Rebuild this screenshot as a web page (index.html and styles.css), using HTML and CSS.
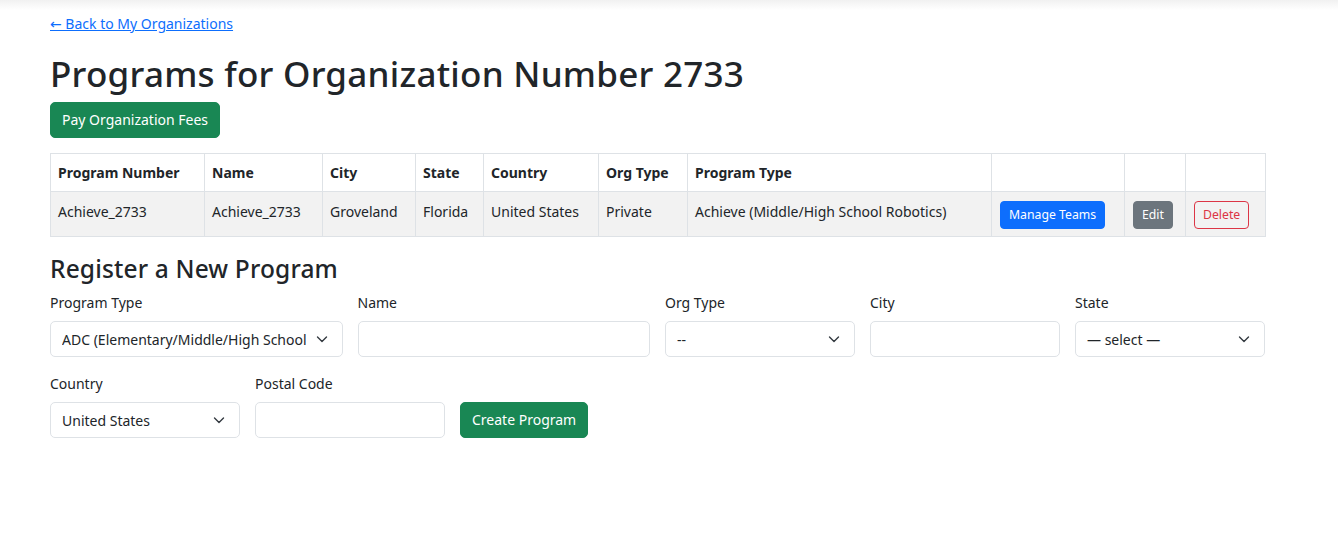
FILE: index.html
```html
<!DOCTYPE html>
<html lang="en">
<head>
<meta charset="utf-8">
<title>Programs for Organization Number 2733</title>
<link rel="stylesheet" href="styles.css">
</head>
<body>
<div class="top-shade"></div>
<main class="page">
  <div class="back"><a href="#">← Back to My Organizations</a></div>
  <h1 class="title">Programs for Organization Number 2733</h1>
  <div class="pay"><button class="btn btn-success">Pay Organization Fees</button></div>

  <table class="grid-table">
    <thead>
      <tr>
        <th class="c1">Program Number</th>
        <th class="c2">Name</th>
        <th class="c3">City</th>
        <th class="c4">State</th>
        <th class="c5">Country</th>
        <th class="c6">Org Type</th>
        <th class="c7">Program Type</th>
        <th class="c8"></th>
        <th class="c9"></th>
        <th class="c10"></th>
      </tr>
    </thead>
    <tbody>
      <tr>
        <td>Achieve_2733</td>
        <td>Achieve_2733</td>
        <td>Groveland</td>
        <td>Florida</td>
        <td>United States</td>
        <td>Private</td>
        <td>Achieve (Middle/High School Robotics)</td>
        <td><button class="btn-sm btn-primary">Manage Teams</button></td>
        <td><button class="btn-sm btn-secondary">Edit</button></td>
        <td><button class="btn-sm btn-outline-danger">Delete</button></td>
      </tr>
    </tbody>
  </table>

  <h3 class="subtitle">Register a New Program</h3>
  <form class="form">
    <div class="form-row row-one">
      <div class="field">
        <label>Program Type</label>
        <select class="control select">
          <option>ADC (Elementary/Middle/High School Robotics)</option>
        </select>
      </div>
      <div class="field">
        <label>Name</label>
        <input class="control" type="text">
      </div>
      <div class="field">
        <label>Org Type</label>
        <select class="control select"><option>--</option></select>
      </div>
      <div class="field">
        <label>City</label>
        <input class="control" type="text">
      </div>
      <div class="field">
        <label>State</label>
        <select class="control select"><option>— select —</option></select>
      </div>
    </div>
    <div class="form-row row-two">
      <div class="field">
        <label>Country</label>
        <select class="control select"><option>United States</option></select>
      </div>
      <div class="field">
        <label>Postal Code</label>
        <input class="control" type="text">
      </div>
      <div class="field action">
        <button type="button" class="btn btn-success btn-create">Create Program</button>
      </div>
    </div>
  </form>
</main>
</body>
</html>
```
FILE: styles.css
```css
* { box-sizing: border-box; }

html, body {
  margin: 0;
  background: #fff;
}

body {
  font-family: "Noto Sans", "DejaVu Sans", sans-serif;
  font-size: 14px;
  line-height: 1.5;
  color: #212529;
}

.top-shade {
  position: absolute;
  top: 0;
  left: 0;
  right: 0;
  height: 10px;
  background: linear-gradient(#f1f1f1, rgba(255,255,255,0));
  pointer-events: none;
}

.page {
  width: 1215px;
  margin-left: 50px;
  padding-top: 13px;
}

.back {
  margin-bottom: 19px;
  line-height: 21px;
}

.back a {
  color: #0d6efd;
  text-decoration: underline;
}

.title {
  margin: 0 0 7px;
  font-size: 35px;
  font-weight: 500;
  line-height: 42px;
  letter-spacing: 0.25px;
}

.pay {
  margin-bottom: 15px;
}

.btn {
  display: inline-block;
  height: 36px;
  padding: 0 11px;
  font-family: inherit;
  font-size: 14px;
  line-height: 34px;
  border: 1px solid transparent;
  border-radius: 5px;
  cursor: pointer;
}

.btn-success {
  background: #198754;
  border-color: #198754;
  color: #fff;
}

.grid-table {
  border-collapse: collapse;
  width: 1215px;
  margin-bottom: 17px;
  table-layout: fixed;
}

.grid-table th,
.grid-table td {
  border: 1px solid #dee2e6;
  padding: 8px 7px;
  text-align: left;
  vertical-align: top;
  white-space: nowrap;
  line-height: 21px;
}

.grid-table th {
  font-weight: 700;
  background: #fff;
}

.grid-table tbody td {
  background: #f2f2f2;
  padding: 9px 7px 7px;
}

.c1 { width: 154px; }
.c2 { width: 118px; }
.c3 { width: 93px; }
.c4 { width: 68px; }
.c5 { width: 115px; }
.c6 { width: 89px; }
.c7 { width: 304px; }
.c8 { width: 133px; }
.c9 { width: 61px; }
.c10 { width: 80px; }

.grid-table td:nth-child(8),
.grid-table td:nth-child(9),
.grid-table td:nth-child(10) {
  padding-left: 8px;
}

.btn-sm {
  display: inline-block;
  height: 28px;
  padding: 0 8px;
  font-family: inherit;
  font-size: 12.25px;
  line-height: 26px;
  border: 1px solid transparent;
  border-radius: 4px;
  vertical-align: middle;
  cursor: pointer;
}

.btn-primary {
  background: #0d6efd;
  border-color: #0d6efd;
  color: #fff;
}

.btn-secondary {
  background: #6c757d;
  border-color: #6c757d;
  color: #fff;
}

.btn-outline-danger {
  background: transparent;
  border-color: #dc3545;
  color: #dc3545;
}

.subtitle {
  margin: 0 0 9px;
  font-size: 24.5px;
  font-weight: 500;
  line-height: 29px;
  letter-spacing: 0.15px;
}

.form-row {
  display: grid;
  column-gap: 15px;
  align-items: end;
}

.row-one {
  grid-template-columns: 292.5px 292.5px 190px 190px 190px;
  margin-bottom: 16px;
}

.row-two {
  grid-template-columns: 190px 190px auto;
  justify-content: start;
}

.btn-create {
  padding: 0 11px;
}

.field label {
  display: block;
  margin-bottom: 8px;
  line-height: 21px;
}

.control {
  display: block;
  width: 100%;
  height: 36px;
  padding: 0 11px;
  font-family: inherit;
  font-size: 14px;
  color: #212529;
  background-color: #fff;
  border: 1px solid #dee2e6;
  border-radius: 5px;
  outline: none;
}

.select {
  -webkit-appearance: none;
  appearance: none;
  padding-right: 36px;
  background-image: url("data:image/svg+xml,%3csvg xmlns='http://www.w3.org/2000/svg' viewBox='0 0 12 8'%3e%3cpath fill='none' stroke='%23343a40' stroke-linecap='round' stroke-linejoin='round' stroke-width='1.4' d='M1.5 2 6 6.5 10.5 2'/%3e%3c/svg%3e");
  background-repeat: no-repeat;
  background-position: right 14px center;
  background-size: 12px 8px;
  text-overflow: clip;
}
```
